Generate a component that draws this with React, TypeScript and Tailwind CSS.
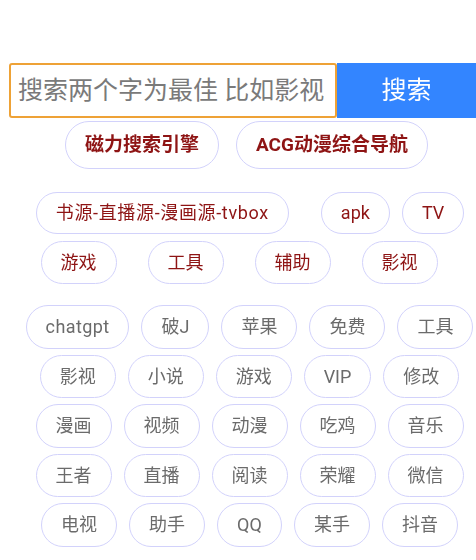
import { useState } from 'react';

const FONT = 'font-["Roboto","Noto_Sans_CJK_SC",sans-serif]';

const hotTop = ['磁力搜索引擎', 'ACG动漫综合导航'];

const rows: string[][] = [
  ['chatgpt', '破J', '苹果', '免费', '工具'],
  ['影视', '小说', '游戏', 'VIP', '修改'],
  ['漫画', '视频', '动漫', '吃鸡', '音乐'],
  ['王者', '直播', '阅读', '荣耀', '微信'],
  ['电视', '助手', 'QQ', '某手', '抖音'],
];

interface PillProps {
  text: string;
  tone?: 'gray' | 'red';
  extra?: string;
}

const Pill = ({ text, tone = 'gray', extra = '' }: PillProps) => (
  <a
    href="#"
    className={`shrink-0 rounded-full border border-[#d2d2fb] bg-white px-[19px] text-[18px] whitespace-nowrap ${
      tone === 'red' ? 'text-[#8e1414] py-[10px] leading-[20px]' : 'text-[#6b6b6b] py-[10px] leading-[21.5px]'
    } ${extra}`}
  >
    {text}
  </a>
);

export default function App() {
  const [q, setQ] = useState('');

  return (
    <div className={`w-[476px] h-[560px] bg-white overflow-hidden ${FONT}`}>
      {/* search bar */}
      <div className="flex pl-[9px] pt-[63px]">
        <input
          autoFocus
          value={q}
          onChange={(e) => setQ(e.target.value)}
          placeholder="搜索两个字为最佳 比如影视"
          className="w-[328px] h-[55px] border-2 border-[#eea236] rounded-[3px] pl-[7px] text-[25px] text-[#222] placeholder-[#7a7a7a] outline-none caret-black"
        />
        <button className="w-[139px] h-[55px] bg-[#3385ff] text-white text-[25px]">搜索</button>
      </div>

      {/* featured links */}
      <div className="flex justify-center gap-[17px] pl-[17px] mt-[3px]">
        {hotTop.map((t) => (
          <a
            key={t}
            href="#"
            className="rounded-full border border-[#d2d2fb] px-[19px] py-[12px] text-[19px] leading-[22px] font-bold text-[#8e1414] whitespace-nowrap"
          >
            {t}
          </a>
        ))}
      </div>

      <div className="flex justify-center pl-[24px] mt-[23px]">
        <Pill text="书源-直播源-漫画源-tvbox" tone="red" extra="tracking-[0.65px]" />
        <div className="ml-[32px] flex gap-3">
          <Pill text="apk" tone="red" />
          <Pill text="TV" tone="red" />
        </div>
      </div>

      <div className="flex justify-center gap-[31px] pl-[2px] mt-[7px]">
        {['游戏', '工具', '辅助', '影视'].map((t) => (
          <Pill key={t} text={t} tone="red" extra="leading-[21px]" />
        ))}
      </div>

      {/* tags */}
      <div className="flex flex-col gap-[6px] mt-[21px]">
        {rows.map((r, i) => (
          <div key={i} className="flex justify-center gap-3 pl-[23px]">
            {r.map((t) => (
              <Pill key={t} text={t} extra={t === 'chatgpt' ? 'tracking-[0.4px]' : ''} />
            ))}
          </div>
        ))}
      </div>
    </div>
  );
}
